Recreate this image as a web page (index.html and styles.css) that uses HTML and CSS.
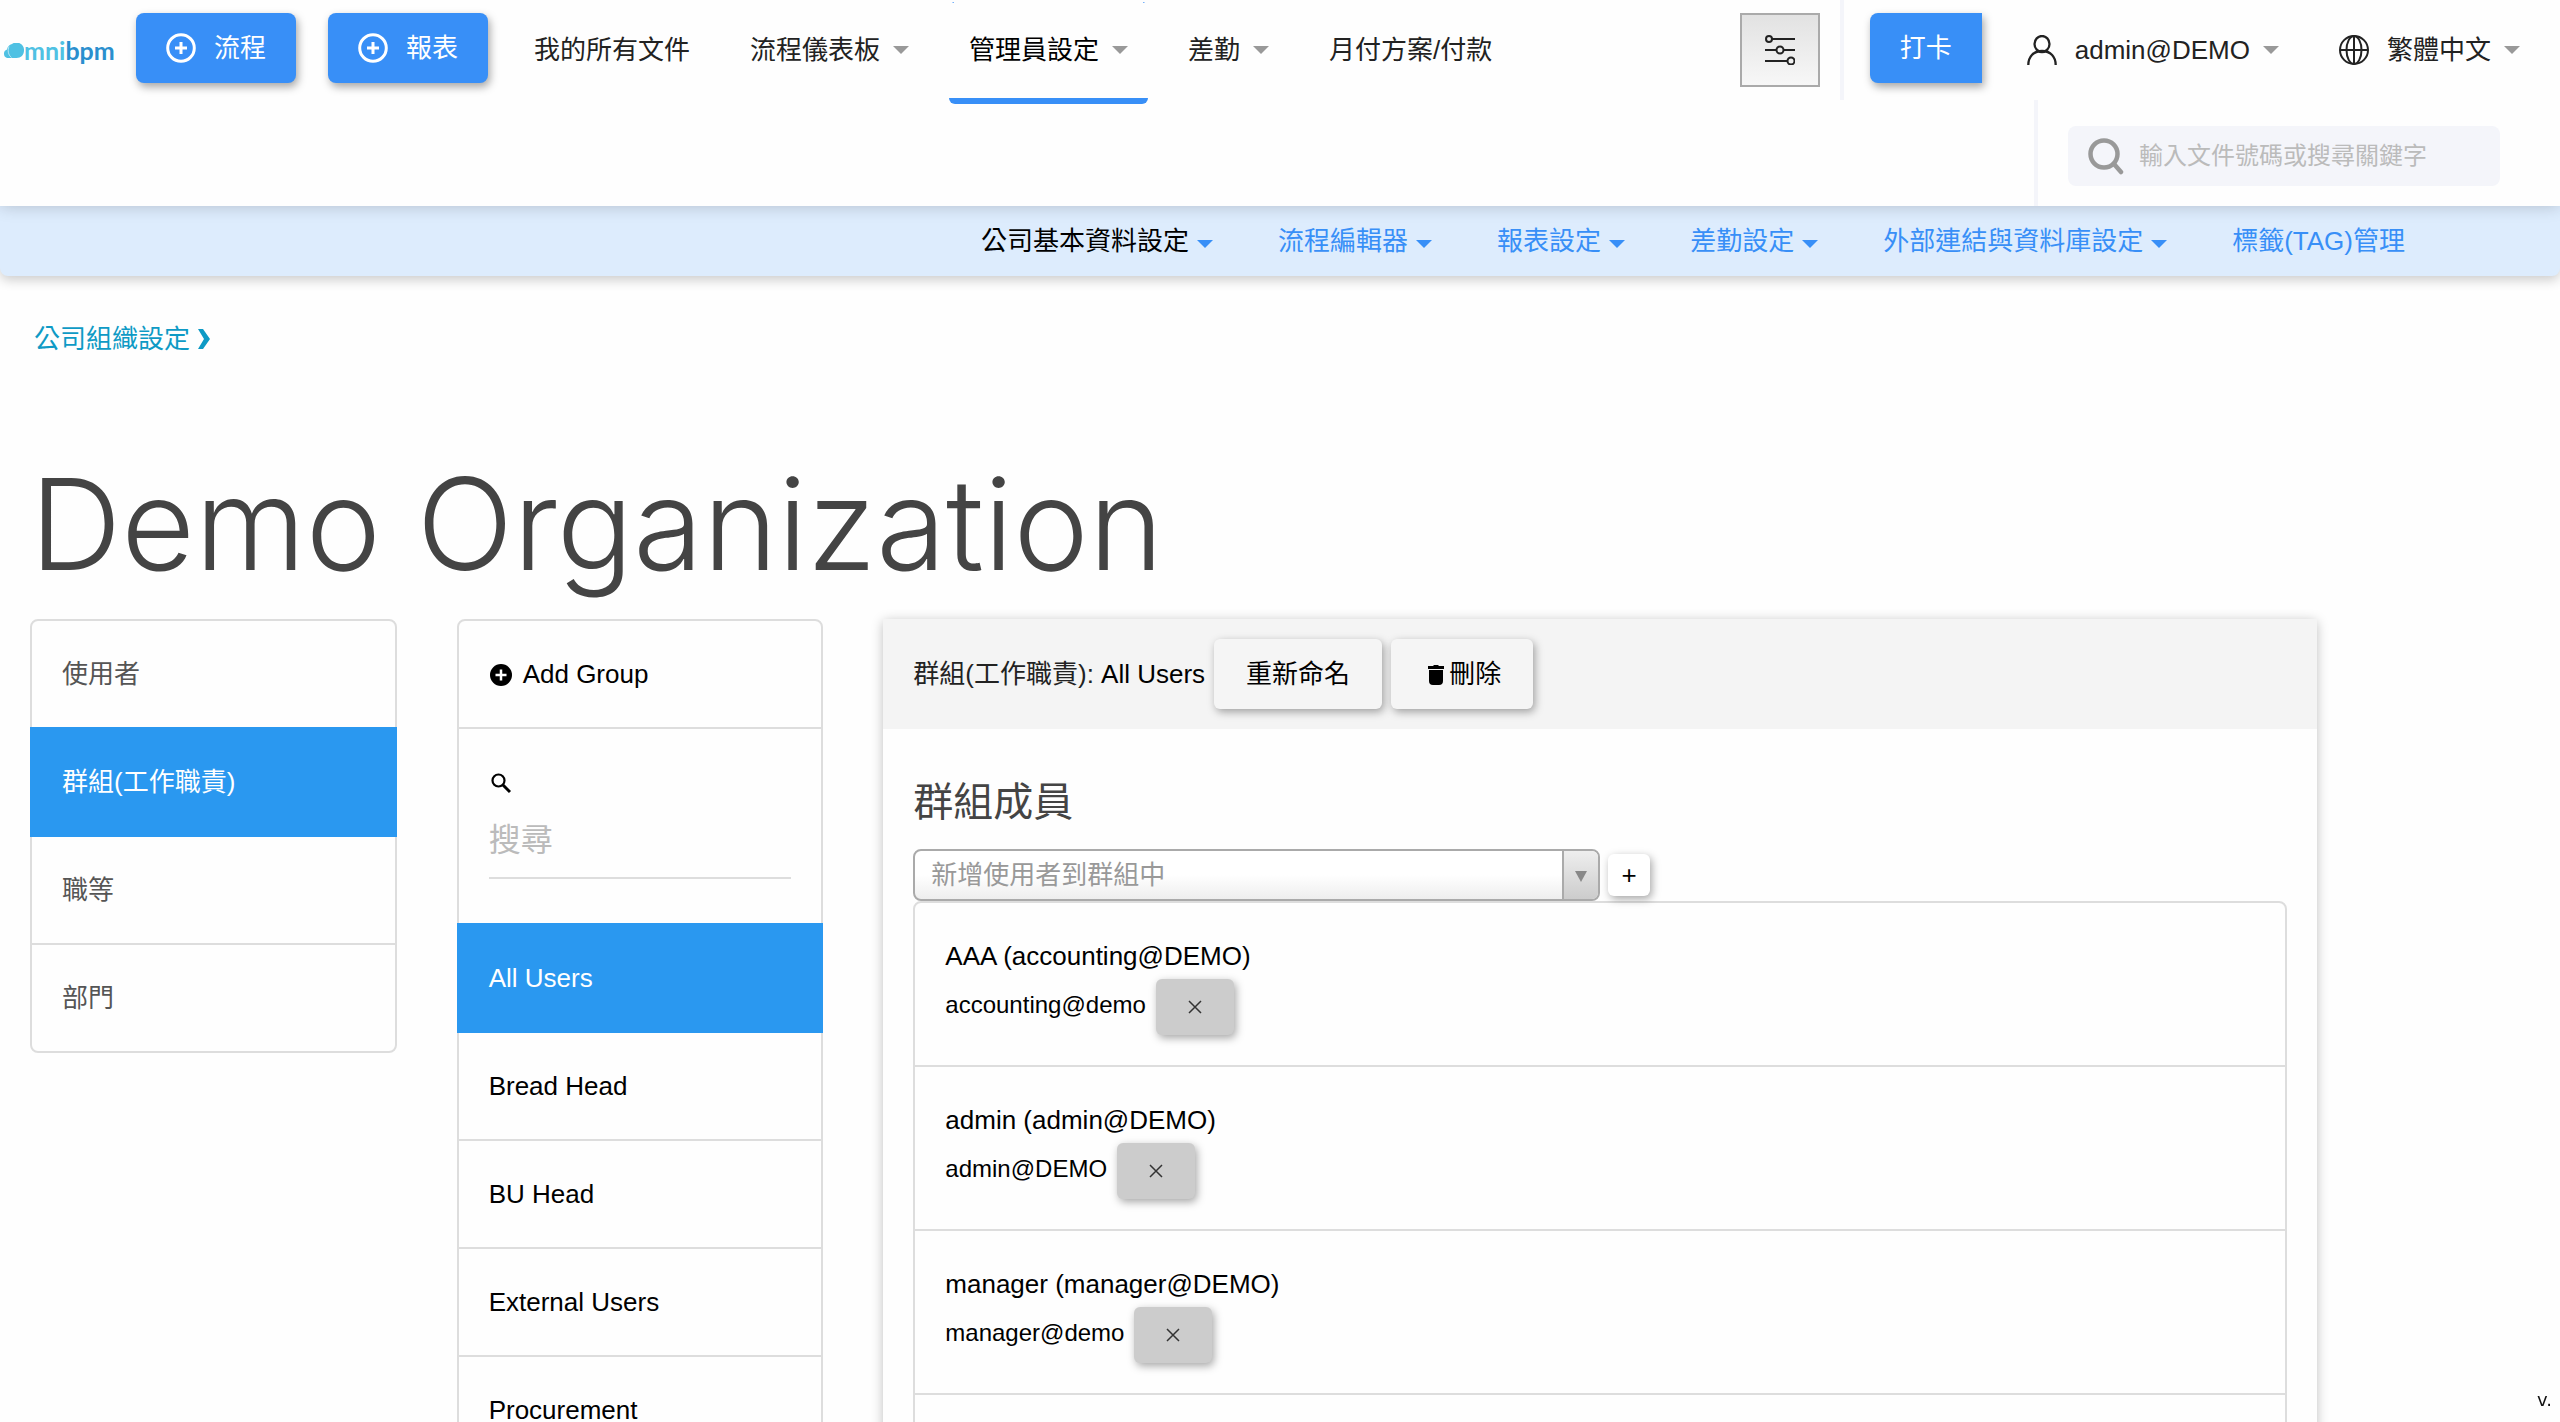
FILE: index.html
```html
<!DOCTYPE html>
<html lang="zh-Hant">
<head>
    <meta charset="UTF-8">
    <meta name="viewport" content="width=device-width, initial-scale=1.0">
    <title>Demo Organization</title>
    <link rel="stylesheet" href="styles.css">
</head>
<body>
    <header class="header">
        <div class="topbar">
            <a class="logo" href="#">
                <svg width="21" height="15" viewBox="0 0 21 15"><path fill="#4fc1e3" d="M4 15a4.500 4.500 0 0 1 0-8.500A7 7 0 0 1 9 1a7.500 7.500 0 0 1 12 6.500C21 12 18 15 13.500 15z"/><path fill="none" stroke="#fff" stroke-width=".6" d="M6 3.500C4.500 7 5 12 8.500 14.500"/></svg>
                <span class="logo-omni">mni</span><span class="logo-bpm">bpm</span>
            </a>
            <button class="btn-primary">
                <svg width="30" height="30" viewBox="0 0 30 30" fill="none" stroke="#fff" stroke-width="3"><circle cx="15" cy="15" r="13.300"/><path d="M15 9v12M9 15h12"/></svg>
                流程
            </button>
            <button class="btn-primary report">
                <svg width="30" height="30" viewBox="0 0 30 30" fill="none" stroke="#fff" stroke-width="3"><circle cx="15" cy="15" r="13.300"/><path d="M15 9v12M9 15h12"/></svg>
                報表
            </button>
            <nav class="main-nav">
                <a href="#">我的所有文件</a>
                <a href="#">流程儀表板<i class="caret"></i></a>
                <a class="active" href="#">管理員設定<i class="caret"></i></a>
                <a href="#">差勤<i class="caret"></i></a>
                <a href="#">月付方案/付款</a>
            </nav>
            <button class="mixer" aria-label="設定">
                <svg width="30" height="30" viewBox="0 0 30 30" fill="none" stroke="#222" stroke-width="2"><path d="M7 4h23M0 15h11M19 15h11M0 26h22"/><circle cx="4" cy="4" r="3"/><circle cx="15" cy="15" r="3.500"/><circle cx="26" cy="26" r="3.500"/></svg>
            </button>
            <div class="separator"></div>
            <button class="btn-primary clock">打卡</button>
            <a class="user" href="#">
                <svg width="30" height="30" viewBox="0 0 30 30" fill="none" stroke="#222" stroke-width="2.300"><ellipse cx="15" cy="9" rx="7.500" ry="8"/><path d="M1.300 30c0-8 5-14 13.700-14s13.700 6 13.700 14"/></svg>
                admin@DEMO<i class="caret"></i>
            </a>
            <a class="language" href="#">
                <svg width="30" height="30" viewBox="0 0 30 30" fill="none" stroke="#222" stroke-width="2"><circle cx="15" cy="15" r="14"/><ellipse cx="15" cy="15" rx="7.500" ry="14"/><path d="M15 1v28M1 15h28"/></svg>
                繁體中文<i class="caret"></i>
            </a>
        </div>
        <div class="searchbar">
            <div class="search-area">
                <label class="search-box">
                    <svg width="36" height="38" viewBox="0 0 36 38" fill="none" stroke="#999" stroke-width="4.500" stroke-linecap="round"><circle cx="16" cy="17" r="13.500"/><path d="M26 27l7 8"/></svg>
                    <input type="text" aria-label="搜尋文件" placeholder="輸入文件號碼或搜尋關鍵字">
                </label>
            </div>
        </div>
    </header>
    <nav class="sub-nav">
        <a class="active" href="#">公司基本資料設定<i class="caret"></i></a>
        <a href="#">流程編輯器<i class="caret"></i></a>
        <a href="#">報表設定<i class="caret"></i></a>
        <a href="#">差勤設定<i class="caret"></i></a>
        <a href="#">外部連結與資料庫設定<i class="caret"></i></a>
        <a href="#">標籤(TAG)管理</a>
    </nav>

    <main>
        <a class="breadcrumb" href="#">公司組織設定
            <svg width="12" height="20" viewBox="0 0 12 20" fill="#0e9ac5"><path d="M0 0h5l7 10-7 10H0l6-10z"/></svg>
        </a>
        <h1>Demo Organization</h1>
        <div class="columns">
            <ul class="menu sections">
                <li><a href="#">使用者</a></li>
                <li class="active"><a href="#">群組(工作職責)</a></li>
                <li><a href="#">職等</a></li>
                <li><a href="#">部門</a></li>
            </ul>
            <ul class="menu groups">
                <li>
                    <a href="#"><svg width="24" height="24" viewBox="0 0 24 24"><circle cx="12" cy="13" r="11"/><path stroke="#fff" stroke-width="2.500" d="M12 7.500v11M6.500 13h11"/></svg>Add Group</a>
                </li>
                <li class="group-search">
                    <label for="group-filter" aria-label="搜尋">
                        <svg width="24" height="24" viewBox="0 0 24 24" fill="none" stroke="#000"><circle cx="9.500" cy="9.500" r="6" stroke-width="2.200"/><path stroke-width="3" d="M14 14l7 7"/></svg>
                    </label>
                    <input id="group-filter" type="text" placeholder="搜尋">
                </li>
                <li class="active"><a href="#">All Users</a></li>
                <li><a href="#">Bread Head</a></li>
                <li><a href="#">BU Head</a></li>
                <li><a href="#">External Users</a></li>
                <li><a href="#">Procurement</a></li>
            </ul>
            <section class="panel">
                <div class="panel-header">
                    <span>群組(工作職責): <span class="group-name">All Users</span></span>
                    <button class="btn">重新命名</button>
                    <button class="btn"><svg width="26" height="24" viewBox="0 0 26 24"><path d="M5 4h5l1-1h4l1 1h5v3H5zM6 8h14v11q0 4-4 4h-6q-4 0-4-4z"/></svg>刪除</button>
                </div>
                <div class="panel-body">
                    <h2>群組成員</h2>
                    <div class="add-member">
                        <div class="select-box">
                            <select aria-label="新增使用者到群組中">
                                <option>新增使用者到群組中</option>
                            </select>
                        </div>
                        <button class="btn btn-add" aria-label="新增">+</button>
                    </div>
                    <ul class="members">
                        <li>
                            <div class="name">AAA (accounting@DEMO)</div>
                            <div class="account">accounting@demo <button class="btn btn-remove" aria-label="移除"><svg width="14" height="14" viewBox="0 0 14 14" stroke="#333" stroke-width="1.500"><path d="M1 1l12 12M13 1L1 13"/></svg></button></div>
                        </li>
                        <li>
                            <div class="name">admin (admin@DEMO)</div>
                            <div class="account">admin@DEMO <button class="btn btn-remove" aria-label="移除"><svg width="14" height="14" viewBox="0 0 14 14" stroke="#333" stroke-width="1.500"><path d="M1 1l12 12M13 1L1 13"/></svg></button></div>
                        </li>
                        <li>
                            <div class="name">manager (manager@DEMO)</div>
                            <div class="account">manager@demo <button class="btn btn-remove" aria-label="移除"><svg width="14" height="14" viewBox="0 0 14 14" stroke="#333" stroke-width="1.500"><path d="M1 1l12 12M13 1L1 13"/></svg></button></div>
                        </li>
                        <li></li>
                    </ul>
                </div>
            </section>
        </div>
    </main>
    <div class="version">v.</div>
</body>
</html>
```
FILE: styles.css
```css
*,
*::before,
*::after {
    box-sizing: border-box;
}

body {
    margin: 0;
    height: 100vh;
    overflow: hidden;
    background-color: #fefefe;
    color: #000;
    font-family: "Liberation Sans", "Noto Sans CJK TC", sans-serif;
    font-size: 26px;
    font-weight: 400;
    line-height: 38px;
}

a {
    color: inherit;
    text-decoration: none;
}

button,
input,
select {
    font: inherit;
    color: inherit;
}

button {
    cursor: pointer;
}

ul {
    margin: 0;
    padding: 0;
    list-style: none;
}

svg {
    flex: none;
}

.caret {
    border: 8px solid transparent;
    border-top-color: #999;
    border-bottom: 0;
}

/* header */
.header {
    position: relative;
    background-color: #fefefe;
    box-shadow: 0 0 16px rgba(0, 0, 0, 0.2);
}

.topbar {
    display: flex;
    align-items: center;
    height: 100px;
    padding: 0 40px 0 3px;
    color: #222;
}

.logo {
    display: flex;
    align-items: center;
    width: 133px;
    font-family: Lato, sans-serif;
    font-size: 25px;
    font-weight: 700;
    line-height: 30px;
}

.logo-omni {
    color: #4fc1e3;
}

.logo-bpm {
    color: #2a8fce;
}

.btn-primary {
    display: flex;
    align-items: center;
    gap: 18px;
    height: 70px;
    margin-bottom: 4px;
    padding: 0 30px;
    border: 0;
    border-radius: 8px;
    background-color: #388ff7;
    box-shadow: 2px 4px 8px rgba(0, 0, 0, 0.35);
    color: #fff;
}

.report {
    margin-left: 32px;
}

.main-nav {
    display: flex;
    gap: 20px;
    margin-left: 26px;
}

.main-nav a {
    position: relative;
    display: flex;
    align-items: center;
    gap: 13px;
    height: 96px;
    padding: 0 20px;
}

.main-nav .active {
    color: #000;
}

.main-nav .active::after {
    content: "";
    position: absolute;
    top: 0;
    left: 0;
    right: 0;
    height: 102px;
    border-bottom: 6px solid #388ff7;
    border-radius: 6px;
    background: linear-gradient(#388ff7, #388ff7) 0 0 / 5px 1px no-repeat,
        linear-gradient(#388ff7, #388ff7) 100% 0 / 5px 1px no-repeat;
}

.mixer {
    display: flex;
    align-items: center;
    justify-content: center;
    width: 80px;
    height: 74px;
    margin-left: auto;
    border: 2px solid #aaa;
    background: linear-gradient(#e2e2e2, #f7f7f7);
}

.separator {
    align-self: flex-start;
    width: 4px;
    height: 100px;
    margin: 0 26px 0 20px;
    background-color: #f4f5fa;
}

.clock {
    border-radius: 8px 0 0 8px;
}

.user,
.language {
    display: flex;
    align-items: center;
    gap: 13px;
}

.user svg,
.language svg {
    margin-right: 5px;
}

.user {
    margin-left: 45px;
}

.language {
    margin-left: 60px;
}

.searchbar {
    display: flex;
    justify-content: flex-end;
}

.search-area {
    padding: 26px 60px 20px 30px;
    border-left: 4px solid #f4f5fa;
}

.search-box {
    display: flex;
    align-items: center;
    gap: 15px;
    width: 432px;
    height: 60px;
    padding: 0 20px;
    border-radius: 8px;
    background-color: #f4f5fa;
}

.search-box input {
    flex: 1;
    min-width: 0;
    padding: 0;
    border: 0;
    outline: 0;
    background: none;
    font-size: 24px;
}

::placeholder {
    color: #bbb;
    opacity: 1;
}

/* sub navigation */
.sub-nav {
    display: flex;
    justify-content: flex-end;
    gap: 65px;
    height: 70px;
    padding: 16px 155px 0 0;
    border-radius: 0 0 8px 8px;
    background-color: #ddecfd;
    box-shadow: 0 4px 12px rgba(0, 0, 0, 0.2);
    color: #388ff7;
}

.sub-nav a {
    display: flex;
    align-items: center;
    gap: 8px;
    height: 38px;
}

.sub-nav .active {
    color: #000;
}

.sub-nav .caret {
    margin-top: 6px;
    border-top-color: #388ff7;
}

/* content */
main {
    padding: 44px 30px 0;
}

.breadcrumb {
    display: flex;
    align-items: center;
    gap: 8px;
    padding-left: 4px;
    color: #0e9ac5;
}

h1 {
    margin: 91px 0 20px;
    color: #444;
    font-family: Inter, "Liberation Sans", sans-serif;
    font-size: 127px;
    font-weight: 300;
    line-height: 150px;
}

.columns {
    display: grid;
    grid-template-columns: repeat(12, 1fr);
    gap: 60px;
    align-items: start;
}

.menu {
    grid-column: span 2;
    border: 2px solid #ddd;
    border-radius: 8px;
}

.menu li {
    border-top: 2px solid #ddd;
}

.menu li:first-child {
    border-top: 0;
}

.menu a {
    display: flex;
    align-items: center;
    gap: 10px;
    height: 106px;
    padding: 0 30px;
}

.sections {
    color: #555;
}

.menu .active {
    position: relative;
    margin: 0 -2px -2px;
    border: 2px solid #2a98f0;
    background-color: #2a98f0;
    color: #fff;
}

.group-search {
    height: 196px;
    padding: 42px 30px 0;
}

.group-search label {
    display: block;
    height: 24px;
}

.group-search svg {
    display: block;
}

.group-search input {
    width: 100%;
    height: 84px;
    padding: 8px 0 0;
    border: 0;
    border-bottom: 2px solid #ddd;
    outline: 0;
    background: none;
    font-size: 32px;
}

.panel {
    grid-column: span 7;
    min-height: 900px;
    border-radius: 4px;
    box-shadow: 0 2px 12px rgba(0, 0, 0, 0.25);
}

.panel-header {
    display: flex;
    align-items: center;
    gap: 9px;
    height: 110px;
    padding: 0 30px;
    background-color: #f4f4f4;
    color: #222;
}

.group-name {
    color: #000;
}

.btn {
    display: inline-flex;
    align-items: center;
    justify-content: center;
    height: 70px;
    padding: 0 32px;
    border: 0;
    border-radius: 6px;
    background-color: #f5f5f5;
    box-shadow: 2px 3px 8px rgba(0, 0, 0, 0.35);
    color: #000;
}

.panel-body {
    padding: 43px 30px 0;
}

h2 {
    margin: 0;
    color: #444;
    font-size: 40px;
    font-weight: 400;
    line-height: 60px;
}

.add-member {
    display: flex;
    align-items: center;
    gap: 8px;
    margin-top: 17px;
}

.select-box {
    position: relative;
    flex: 0 1 50%;
    height: 52px;
    border: 2px solid #aaa;
    border-radius: 8px;
    background: linear-gradient(#fff 50%, #eee);
    overflow: hidden;
}

.select-box::before {
    content: "";
    position: absolute;
    top: 0;
    right: 0;
    width: 36px;
    height: 48px;
    border-left: 2px solid #aaa;
    background: linear-gradient(#eee, #ccc);
}

.select-box::after {
    content: "";
    position: absolute;
    top: 20px;
    right: 11px;
    border: 6px solid transparent;
    border-top: 11px solid #888;
    border-bottom: 0;
}

.select-box select {
    appearance: none;
    width: 100%;
    height: 48px;
    padding: 0 16px;
    border: 0;
    background: none;
    color: #999;
}

.btn-add {
    width: 42px;
    height: 42px;
    padding: 0;
    background-color: #fff;
}

.members {
    border: 2px solid #ddd;
    border-radius: 8px;
}

.members li {
    height: 164px;
    padding: 34px 30px 0;
    border-bottom: 2px solid #ddd;
}

.account {
    display: flex;
    gap: 10px;
    font-size: 24px;
    line-height: 60px;
}

.btn-remove {
    width: 78px;
    height: 56px;
    margin-top: 4px;
    background-color: #ccc;
}

.version {
    position: fixed;
    right: 8px;
    bottom: 4px;
    color: #111;
    font-family: "DejaVu Sans", sans-serif;
    font-size: 18px;
    line-height: 36px;
}
```
